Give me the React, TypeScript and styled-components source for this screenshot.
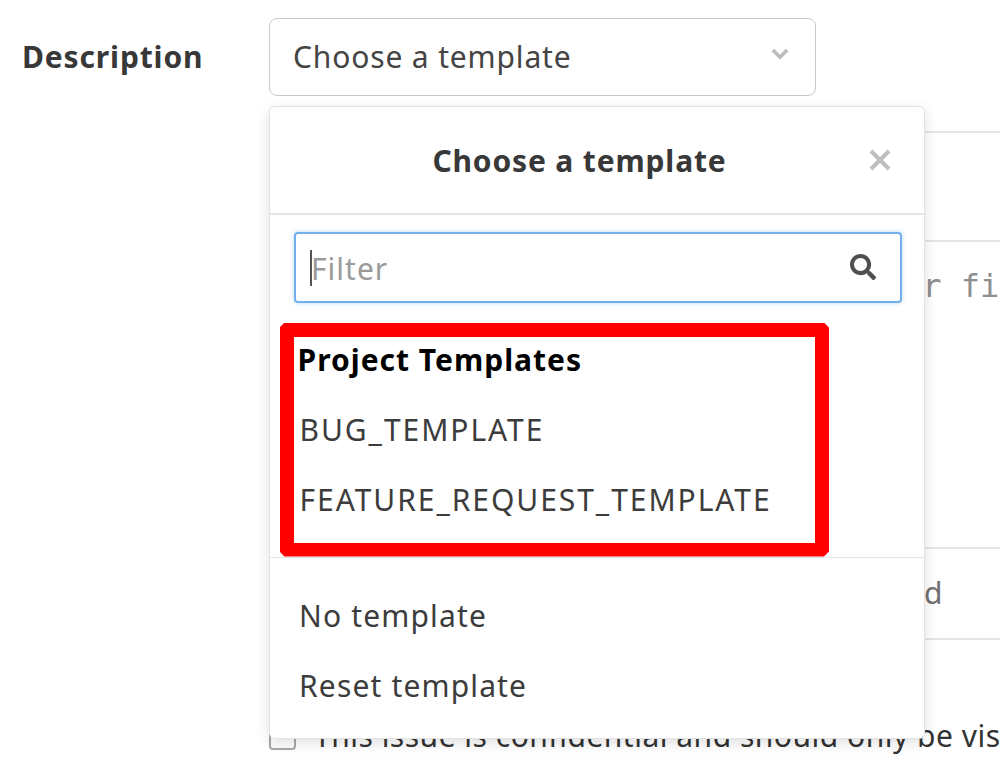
import { createGlobalStyle, styled } from "styled-components";
import { FaSearch } from "react-icons/fa";

const GlobalStyle = createGlobalStyle`
  html, body {
    margin: 0;
    height: 100%;
    background: #fff;
    overflow: hidden;
  }
  body {
    font-family: "Noto Sans", "Open Sans", sans-serif;
    font-size: 30px;
    letter-spacing: 0.85px;
    color: #2e2e2e;
  }
`;

const Page = styled.div`
  width: 1000px;
  height: 784px;
  overflow: hidden;
  display: flex;
  padding: 18px 0 0 22px;
  box-sizing: border-box;
`;

const FieldLabel = styled.label`
  width: 247px;
  flex: none;
  font-weight: 700;
  line-height: 78px;
  color: #383838;
`;

const FieldColumn = styled.div`
  position: relative;
  flex: none;
  width: 900px;
`;

const TemplateSelect = styled.button`
  display: flex;
  align-items: center;
  justify-content: space-between;
  width: 547px;
  height: 78px;
  box-sizing: border-box;
  padding: 0 26px 2px 23px;
  background: #fff;
  border: 1.5px solid #c8c8c8;
  border-radius: 8px;
  font: inherit;
  letter-spacing: inherit;
  color: #444;
`;

const ChevronIcon = styled.svg`
  flex: none;
  width: 18px;
  height: 18px;
  margin-bottom: 4px;
  color: #bdbdbd;
`;

const Editor = styled.div`
  margin-top: 35px;
  border-top: 2px solid #e5e5e5;
`;

const EditorTabs = styled.div`
  height: 107px;
  border-bottom: 2px solid #e5e5e5;
`;

const EditorBody = styled.div`
  height: 307px;
  padding: 24px 0 0 56px;
  box-sizing: border-box;
  font-family: "DejaVu Sans Mono", monospace;
  font-size: 32px;
  letter-spacing: 0;
  line-height: 40px;
  color: #8f8f8f;
  white-space: nowrap;
  border-bottom: 2px solid #e5e5e5;
`;

const EditorFooter = styled.div`
  height: 89px;
  line-height: 88px;
  padding-left: 62px;
  letter-spacing: 0;
  color: #707070;
  white-space: nowrap;
  border-bottom: 2px solid #e5e5e5;
`;

const ConfidentialRow = styled.label`
  display: flex;
  align-items: center;
  gap: 18px;
  margin-top: 74px;
  line-height: 44px;
  letter-spacing: 0.5px;
  white-space: nowrap;
  color: #333;
`;

const Checkbox = styled.span`
  flex: none;
  width: 23px;
  height: 23px;
  border: 2px solid #a8a8a8;
  border-radius: 4px;
`;

const Popup = styled.div`
  position: absolute;
  top: 88px;
  left: 0;
  width: 656px;
  height: 633px;
  box-sizing: border-box;
  background: #fff;
  border: 1.5px solid #e3e3e3;
  border-radius: 6px;
  box-shadow: 0 4px 14px rgba(0, 0, 0, 0.13);
`;

const PopupHeader = styled.div`
  display: flex;
  align-items: center;
  height: 108px;
  box-sizing: border-box;
  padding: 0 32px 0 21px;
  border-bottom: 2px solid #e5e5e5;
`;

const PopupTitle = styled.div`
  flex: 1;
  text-align: center;
  font-weight: 700;
  color: #383838;
`;

const CloseIcon = styled.svg`
  flex: none;
  width: 24px;
  height: 24px;
  color: #bfbfbf;
`;

const FilterBox = styled.div`
  position: relative;
  margin: 17px 22px 0 24px;
  height: 70.5px;
`;

const FilterInput = styled.input`
  width: 100%;
  height: 100%;
  box-sizing: border-box;
  padding: 3px 60px 0 15px;
  border: 2px solid #73afea;
  border-radius: 4px;
  box-shadow: 0 0 4px rgba(115, 175, 234, 0.5);
  outline: none;
  font: inherit;
  letter-spacing: 1px;
  color: #333;

  &::placeholder {
    color: #9a9a9a;
    opacity: 1;
  }
`;

const Caret = styled.span`
  position: absolute;
  left: 16px;
  top: 17.5px;
  width: 1.5px;
  height: 36px;
  background: #555;
`;

const SearchIcon = styled(FaSearch)`
  position: absolute;
  right: 26px;
  top: 21.5px;
  width: 26px;
  height: 26px;
  color: #4f4f4f;
`;

const HighlightBox = styled.div`
  margin: 20px 0 0 9.5px;
  width: 549.5px;
  height: 234px;
  box-sizing: border-box;
  border: 14.5px solid #ff0000;
  clip-path: polygon(
    5px 0, calc(100% - 5px) 0, 100% 5px, 100% calc(100% - 5px),
    calc(100% - 5px) 100%, 5px 100%, 0 calc(100% - 5px), 0 5px
  );
`;

const GroupHeading = styled.div`
  height: 44px;
  line-height: 44px;
  margin: 1px 0 13px;
  padding-left: 4px;
  font-weight: 700;
  letter-spacing: 1px;
  color: #000;
`;

const MenuItem = styled.div<{ $inset: number; $caps?: boolean }>`
  height: 70px;
  line-height: 70px;
  padding-left: ${(p) => p.$inset}px;
  letter-spacing: ${(p) => (p.$caps ? "1.95px" : "1.15px")};
  color: #3c3c3c;
  white-space: nowrap;
`;

const PopupFooter = styled.div`
  padding-top: 23.5px;
  border-top: 1.5px solid #e5e5e5;
`;

export default function App() {
  return (
    <Page>
      <GlobalStyle />
      <FieldLabel>Description</FieldLabel>
      <FieldColumn>
        <TemplateSelect type="button">
          Choose a template
          <ChevronIcon viewBox="0 0 18 18">
            <path d="M1.8 5 L9 12.2 L16.2 5" stroke="currentColor" strokeWidth="3.6" fill="none" />
          </ChevronIcon>
        </TemplateSelect>

        <Editor>
          <EditorTabs />
          <EditorBody>Write a description or drag your files here</EditorBody>
          <EditorFooter>Markdown and quick actions are supported</EditorFooter>
        </Editor>

        <ConfidentialRow>
          <Checkbox />
          This issue is confidential and should only be visible to team members
        </ConfidentialRow>

        <Popup>
          <PopupHeader>
            <PopupTitle>Choose a template</PopupTitle>
            <CloseIcon viewBox="0 0 24 24">
              <path d="M3 3 L21 21 M21 3 L3 21" stroke="currentColor" strokeWidth="4" fill="none" />
            </CloseIcon>
          </PopupHeader>
          <FilterBox>
            <FilterInput placeholder="Filter" readOnly />
            <Caret />
            <SearchIcon />
          </FilterBox>
          <HighlightBox>
            <GroupHeading>Project Templates</GroupHeading>
            <MenuItem $inset={6} $caps>BUG_TEMPLATE</MenuItem>
            <MenuItem $inset={6} $caps>FEATURE_REQUEST_TEMPLATE</MenuItem>
          </HighlightBox>
          <PopupFooter>
            <MenuItem $inset={29}>No template</MenuItem>
            <MenuItem $inset={29}>Reset template</MenuItem>
          </PopupFooter>
        </Popup>
      </FieldColumn>
    </Page>
  );
}
